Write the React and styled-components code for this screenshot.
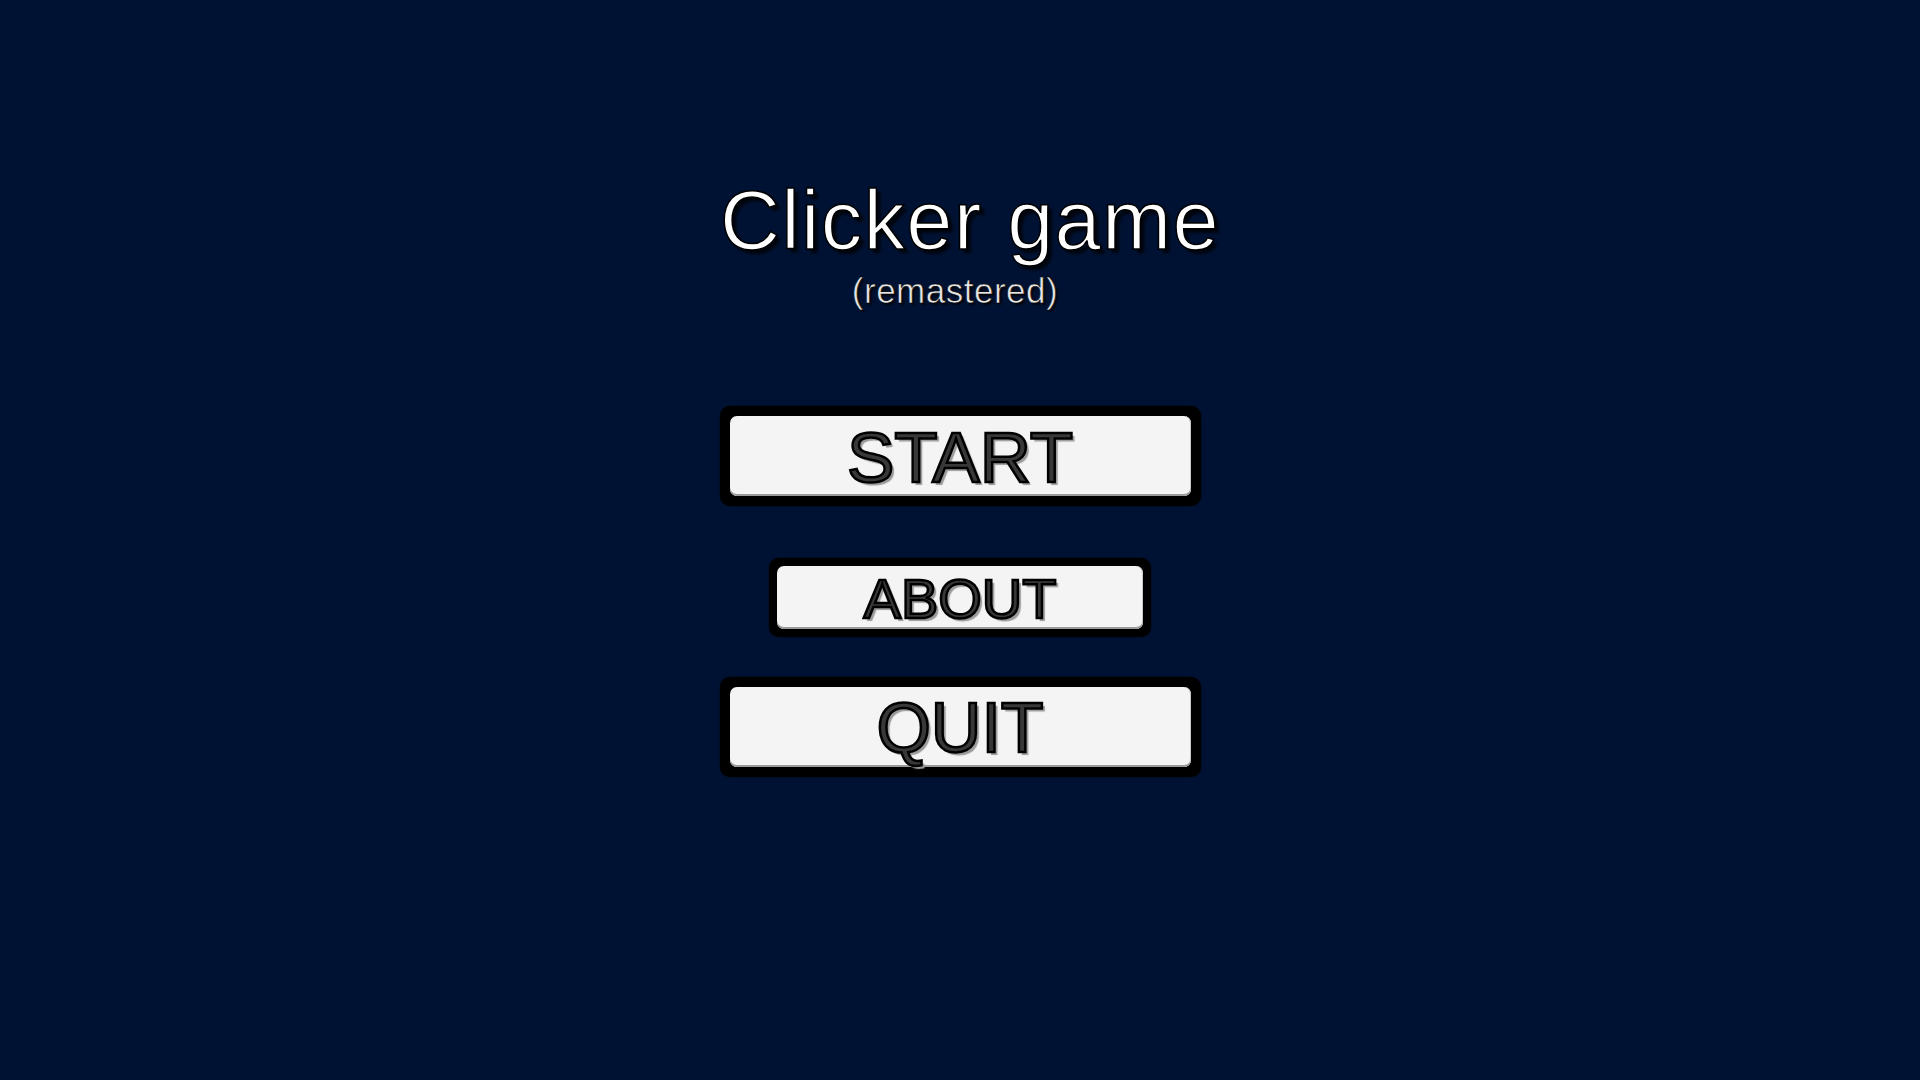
import React from "react";
import styled, { createGlobalStyle } from "styled-components";

const GlobalStyle = createGlobalStyle`
  html, body {
    margin: 0;
    padding: 0;
    background: #001233;
  }
  body {
    font-family: "Liberation Sans", Arial, sans-serif;
  }
`;

const Screen = styled.div`
  width: 100vw;
  height: 100vh;
  background: #001233;
  display: flex;
  flex-direction: column;
  align-items: center;
  padding-top: 179px;
  box-sizing: border-box;
  overflow: hidden;
`;

const Title = styled.h1`
  margin: 0 0 0 20px;
  font-size: 83px;
  line-height: 1;
  font-weight: 400;
  letter-spacing: 1.3px;
  color: #fff;
  -webkit-text-stroke: 1.5px #000;
  text-shadow: 4px 4px 3px rgba(0, 0, 0, 0.75);
`;

const Subtitle = styled.div`
  margin: 11px 10px 0 0;
  font-size: 35px;
  line-height: 1;
  letter-spacing: 0.5px;
  color: #e6e6e6;
  -webkit-text-stroke: 0.6px #000;
  text-shadow: 2px 2px 2px rgba(0, 0, 0, 0.7);
`;

const Menu = styled.nav`
  display: flex;
  flex-direction: column;
  align-items: center;
  margin-top: 98px;
`;

const Frame = styled.div`
  box-sizing: border-box;
  width: ${(p) => (p.small ? 382 : 481)}px;
  height: ${(p) => (p.small ? 79 : 100)}px;
  padding: ${(p) => (p.small ? 8 : 10)}px;
  margin-top: ${(p) => p.gap || 0}px;
  background: #000;
  border-radius: 10px;
  box-shadow: 0 0 2px rgba(0, 0, 0, 0.8);
`;

const Button = styled.button`
  width: 100%;
  height: 100%;
  display: flex;
  align-items: center;
  justify-content: center;
  border: none;
  padding: 2px 0 0;
  border-radius: 7px;
  background: #f4f4f4;
  box-shadow: inset 0 -2px 0 #9a9a9a, inset -1px 0 0 #c8c8c8;
  cursor: pointer;
  font-family: "Liberation Sans", Arial, sans-serif;
  font-size: ${(p) => p.size}px;
  line-height: 1;
  font-weight: 400;
  color: #383838;
  -webkit-text-stroke: 2.5px #000;
  text-shadow: 3px 3px 1px #9a9a9a;
`;

const items = [
  { label: "START", gap: 0, size: 71 },
  { label: "ABOUT", gap: 52, size: 56, small: true },
  { label: "QUIT", gap: 40, size: 70 },
];

export default function App() {
  return (
    <>
      <GlobalStyle />
      <Screen>
        <Title>Clicker game</Title>
        <Subtitle>(remastered)</Subtitle>
        <Menu>
          {items.map((item) => (
            <Frame key={item.label} small={item.small} gap={item.gap}>
              <Button small={item.small} size={item.size}>
                {item.label}
              </Button>
            </Frame>
          ))}
        </Menu>
      </Screen>
    </>
  );
}
